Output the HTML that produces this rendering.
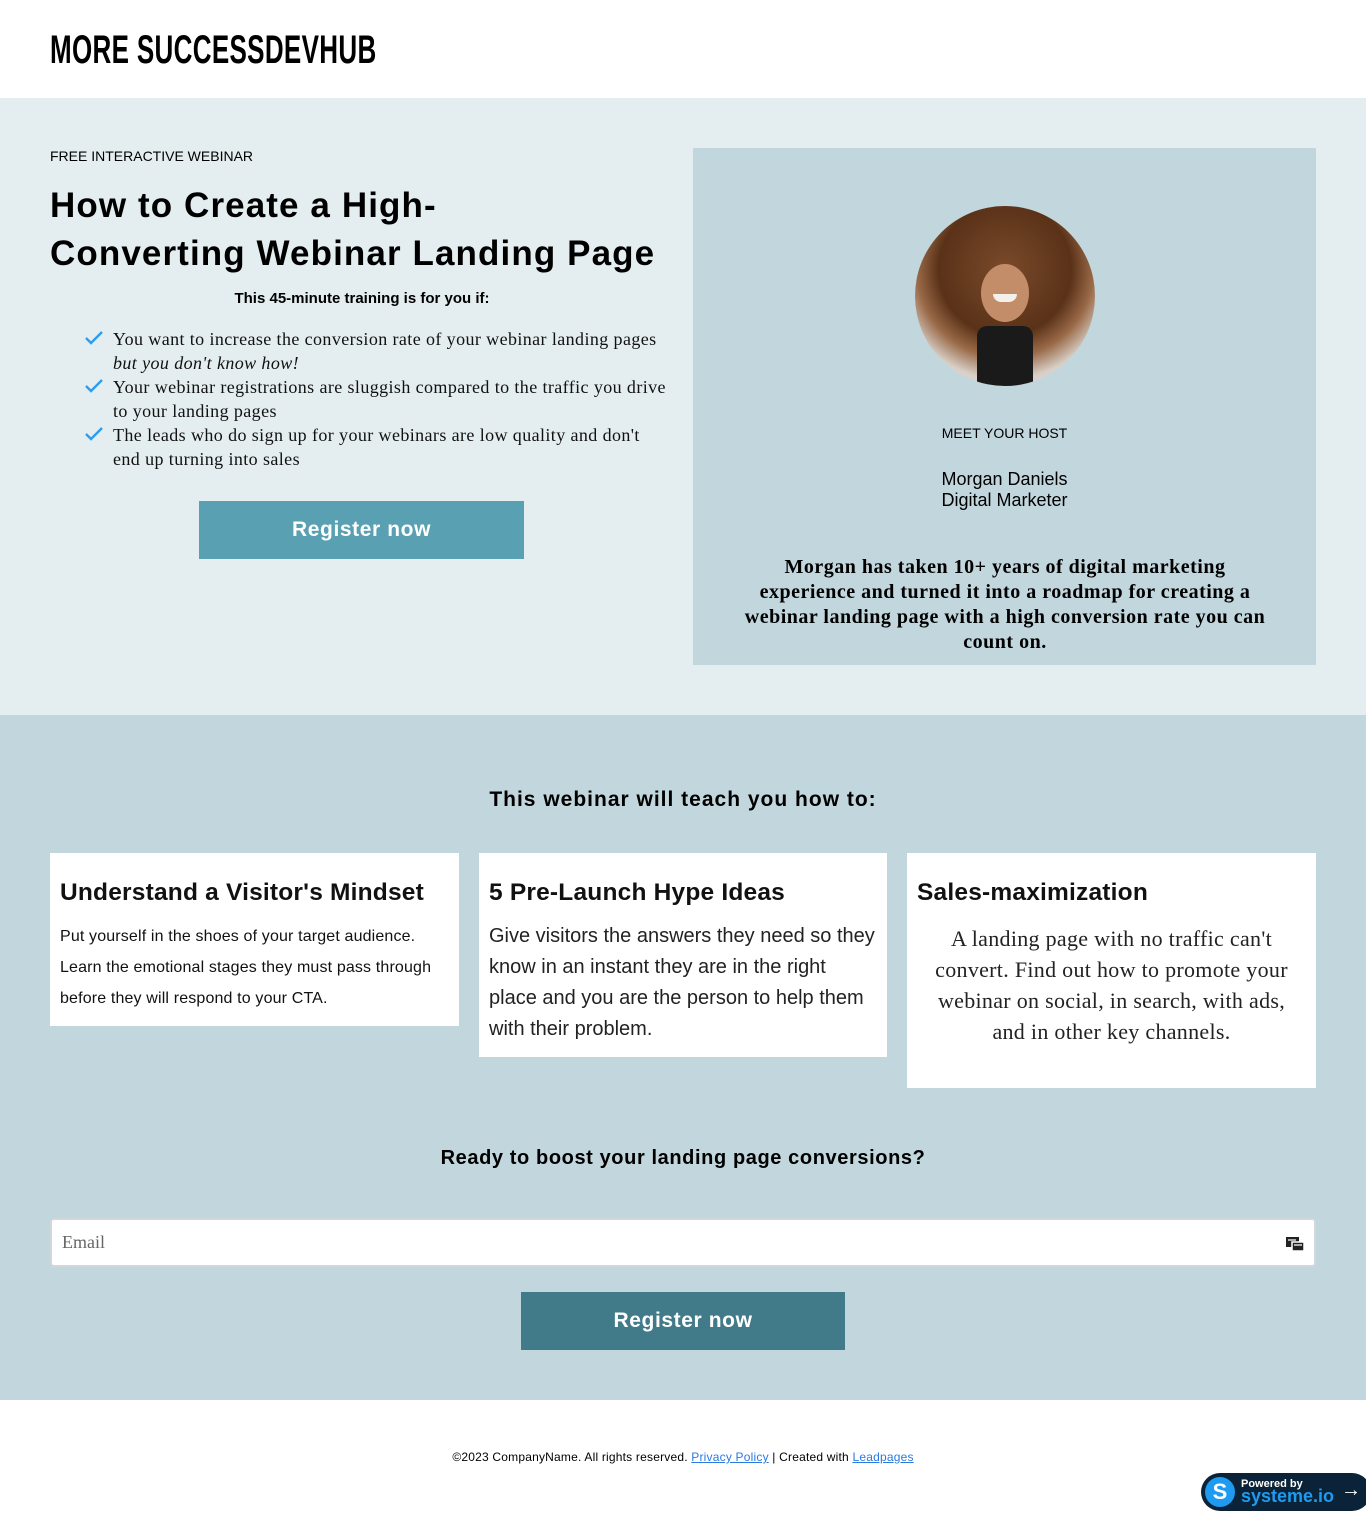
<!DOCTYPE html>
<html><head><meta charset="utf-8"><style>
*{margin:0;padding:0;box-sizing:border-box}
body{width:1366px;height:1515px;background:#fff;font-family:"Liberation Sans",sans-serif;color:#000;position:relative;overflow:hidden}
.abs{position:absolute}
.logo{left:50px;top:28px;font-size:40px;font-weight:bold;transform:scaleX(0.65);transform-origin:left top;letter-spacing:0.5px;white-space:nowrap}
.hero{left:0;top:98px;width:1366px;height:617px;background:#e4eef0}
.h1{left:50px;top:182px;font-size:35px;font-weight:900;line-height:48px;letter-spacing:1.1px}
ul{list-style:none}
li{position:relative;padding-left:63px;font-family:"Liberation Serif",serif;font-size:18px;line-height:24px;color:#111;letter-spacing:0.4px}
li svg{position:absolute;left:34px;top:4px}
.btn{color:#fff;font-weight:900;font-size:21px;text-align:center;line-height:58px;letter-spacing:0.6px}
.card{background:#fff}
.card h3{font-size:24.5px;font-weight:bold;letter-spacing:0.2px;color:#111}
</style></head><body>
<div class="abs logo">MORE SUCCESSDEVHUB</div>
<div class="abs hero"></div>
<div class="abs" style="left:50px;top:148px;font-size:14px">FREE INTERACTIVE WEBINAR</div>
<div class="abs h1">How to Create a High-<br>Converting Webinar Landing Page</div>
<div class="abs" style="left:50px;top:290px;width:624px;text-align:center;font-size:15px;font-weight:bold">This 45-minute training is for you if:</div>
<ul class="abs" style="left:50px;top:327px;width:640px">
<li><svg width="20" height="14" viewBox="0 0 20 14"><path d="M2 7l5 5L18 1" stroke="#2a9df4" stroke-width="2.4" fill="none"/></svg>You want to increase the conversion rate of your webinar landing pages<br><i>but you don't know how!</i></li>
<li><svg width="20" height="14" viewBox="0 0 20 14"><path d="M2 7l5 5L18 1" stroke="#2a9df4" stroke-width="2.4" fill="none"/></svg>Your webinar registrations are sluggish compared to the traffic you drive<br>to your landing pages</li>
<li><svg width="20" height="14" viewBox="0 0 20 14"><path d="M2 7l5 5L18 1" stroke="#2a9df4" stroke-width="2.4" fill="none"/></svg>The leads who do sign up for your webinars are low quality and don't<br>end up turning into sales</li>
</ul>
<div class="abs btn" style="left:199px;top:501px;width:325px;height:58px;background:#59a0b2">Register now</div>
<div class="abs" style="left:693px;top:148px;width:623px;height:517px;background:#c1d6dd"></div>
<div class="abs" style="left:915px;top:206px;width:180px;height:180px;border-radius:50%;overflow:hidden;background:radial-gradient(circle at 50% 35%,#7a4a2a 0,#5a3218 45%,#9a6a48 60%,#d8d0c8 75%,#e6e0da 100%)">
<div class="abs" style="left:62px;top:120px;width:56px;height:60px;background:#1a1a1a;border-radius:10px 10px 0 0"></div>
<div class="abs" style="left:66px;top:58px;width:48px;height:58px;background:#c48d6a;border-radius:50%"></div>
<div class="abs" style="left:78px;top:88px;width:24px;height:8px;background:#f3efe9;border-radius:0 0 12px 12px"></div>
</div>
<div class="abs" style="left:693px;top:425px;width:623px;text-align:center;font-size:14px">MEET YOUR HOST</div>
<div class="abs" style="left:693px;top:469px;width:623px;text-align:center;font-size:18px;line-height:21px">Morgan Daniels<br>Digital Marketer</div>
<div class="abs" style="left:735px;top:555px;width:540px;text-align:center;font-family:'Liberation Serif',serif;font-weight:bold;font-size:20px;line-height:25px;letter-spacing:0.5px">Morgan has taken 10+ years of digital marketing<br>experience and turned it into a roadmap for creating a<br>webinar landing page with a high conversion rate you can<br>count on.</div>

<div class="abs" style="left:0;top:715px;width:1366px;height:685px;background:#c1d6dd"></div>
<div class="abs" style="left:0;top:788px;width:1366px;text-align:center;font-size:21px;font-weight:900;letter-spacing:1px">This webinar will teach you how to:</div>
<div class="abs card" style="left:50px;top:853px;width:409px;height:173px;padding:26px 10px">
<h3>Understand a Visitor's Mindset</h3>
<p style="font-size:16px;line-height:31px;margin-top:14px;color:#111;letter-spacing:0.15px">Put yourself in the shoes of your target audience. Learn the emotional stages they must pass through before they will respond to your CTA.</p></div>
<div class="abs card" style="left:479px;top:853px;width:408px;height:204px;padding:26px 10px">
<h3>5 Pre-Launch Hype Ideas</h3>
<p style="font-size:20px;line-height:31px;margin-top:14px;color:#222">Give visitors the answers they need so they know in an instant they are in the right place and you are the person to help them with their problem.</p></div>
<div class="abs card" style="left:907px;top:853px;width:409px;height:235px;padding:26px 10px">
<h3>Sales-maximization</h3>
<p style="font-family:'Liberation Serif',serif;font-size:22px;line-height:31px;margin-top:16px;text-align:center;color:#222;letter-spacing:0.3px">A landing page with no traffic can't<br>convert. Find out how to promote your<br>webinar on social, in search, with ads,<br>and in other key channels.</p></div>
<div class="abs" style="left:0;top:1147px;width:1366px;text-align:center;font-size:20px;font-weight:bold;letter-spacing:0.6px">Ready to boost your landing page conversions?</div>
<div class="abs" style="left:50px;top:1218px;width:1266px;height:49px;background:#fff;border:2px solid #d0d8dc;border-radius:4px;font-family:'Liberation Serif',serif;font-size:18px;color:#666;padding:12px 10px">Email
<svg class="abs" style="right:8px;top:13px" width="22" height="20" viewBox="0 0 22 20"><rect x="2" y="4" width="13" height="10" fill="#222"/><rect x="8" y="9" width="12" height="9" fill="#222" stroke="#fff" stroke-width="1.5"/><path d="M4 7h8M10 12h8" stroke="#fff" stroke-width="1.2"/></svg></div>
<div class="abs btn" style="left:521px;top:1292px;width:324px;height:58px;background:#417b8a">Register now</div>
<div class="abs" style="left:0;top:1450px;width:1366px;text-align:center;font-size:12px;letter-spacing:0.2px">©2023 CompanyName. All rights reserved. <span style="color:#2a7ae2;text-decoration:underline">Privacy Policy</span> | Created with <span style="color:#2a7ae2;text-decoration:underline">Leadpages</span></div>
<div class="abs" style="left:1201px;top:1473px;width:170px;height:38px;background:#0b2338;border-radius:19px">
<div class="abs" style="left:4px;top:4px;width:30px;height:30px;border-radius:50%;background:#1e9bf0;color:#fff;font-weight:bold;font-size:22px;text-align:center;line-height:30px">S</div>
<div class="abs" style="left:40px;top:5px;color:#fff;font-size:11px;font-weight:bold">Powered by</div>
<div class="abs" style="left:40px;top:13px;color:#1e9bf0;font-size:18px;font-weight:bold">systeme.io</div>
<div class="abs" style="left:140px;top:6px;color:#fff;font-size:20px;font-weight:bold">→</div>
</div>
</body></html>
